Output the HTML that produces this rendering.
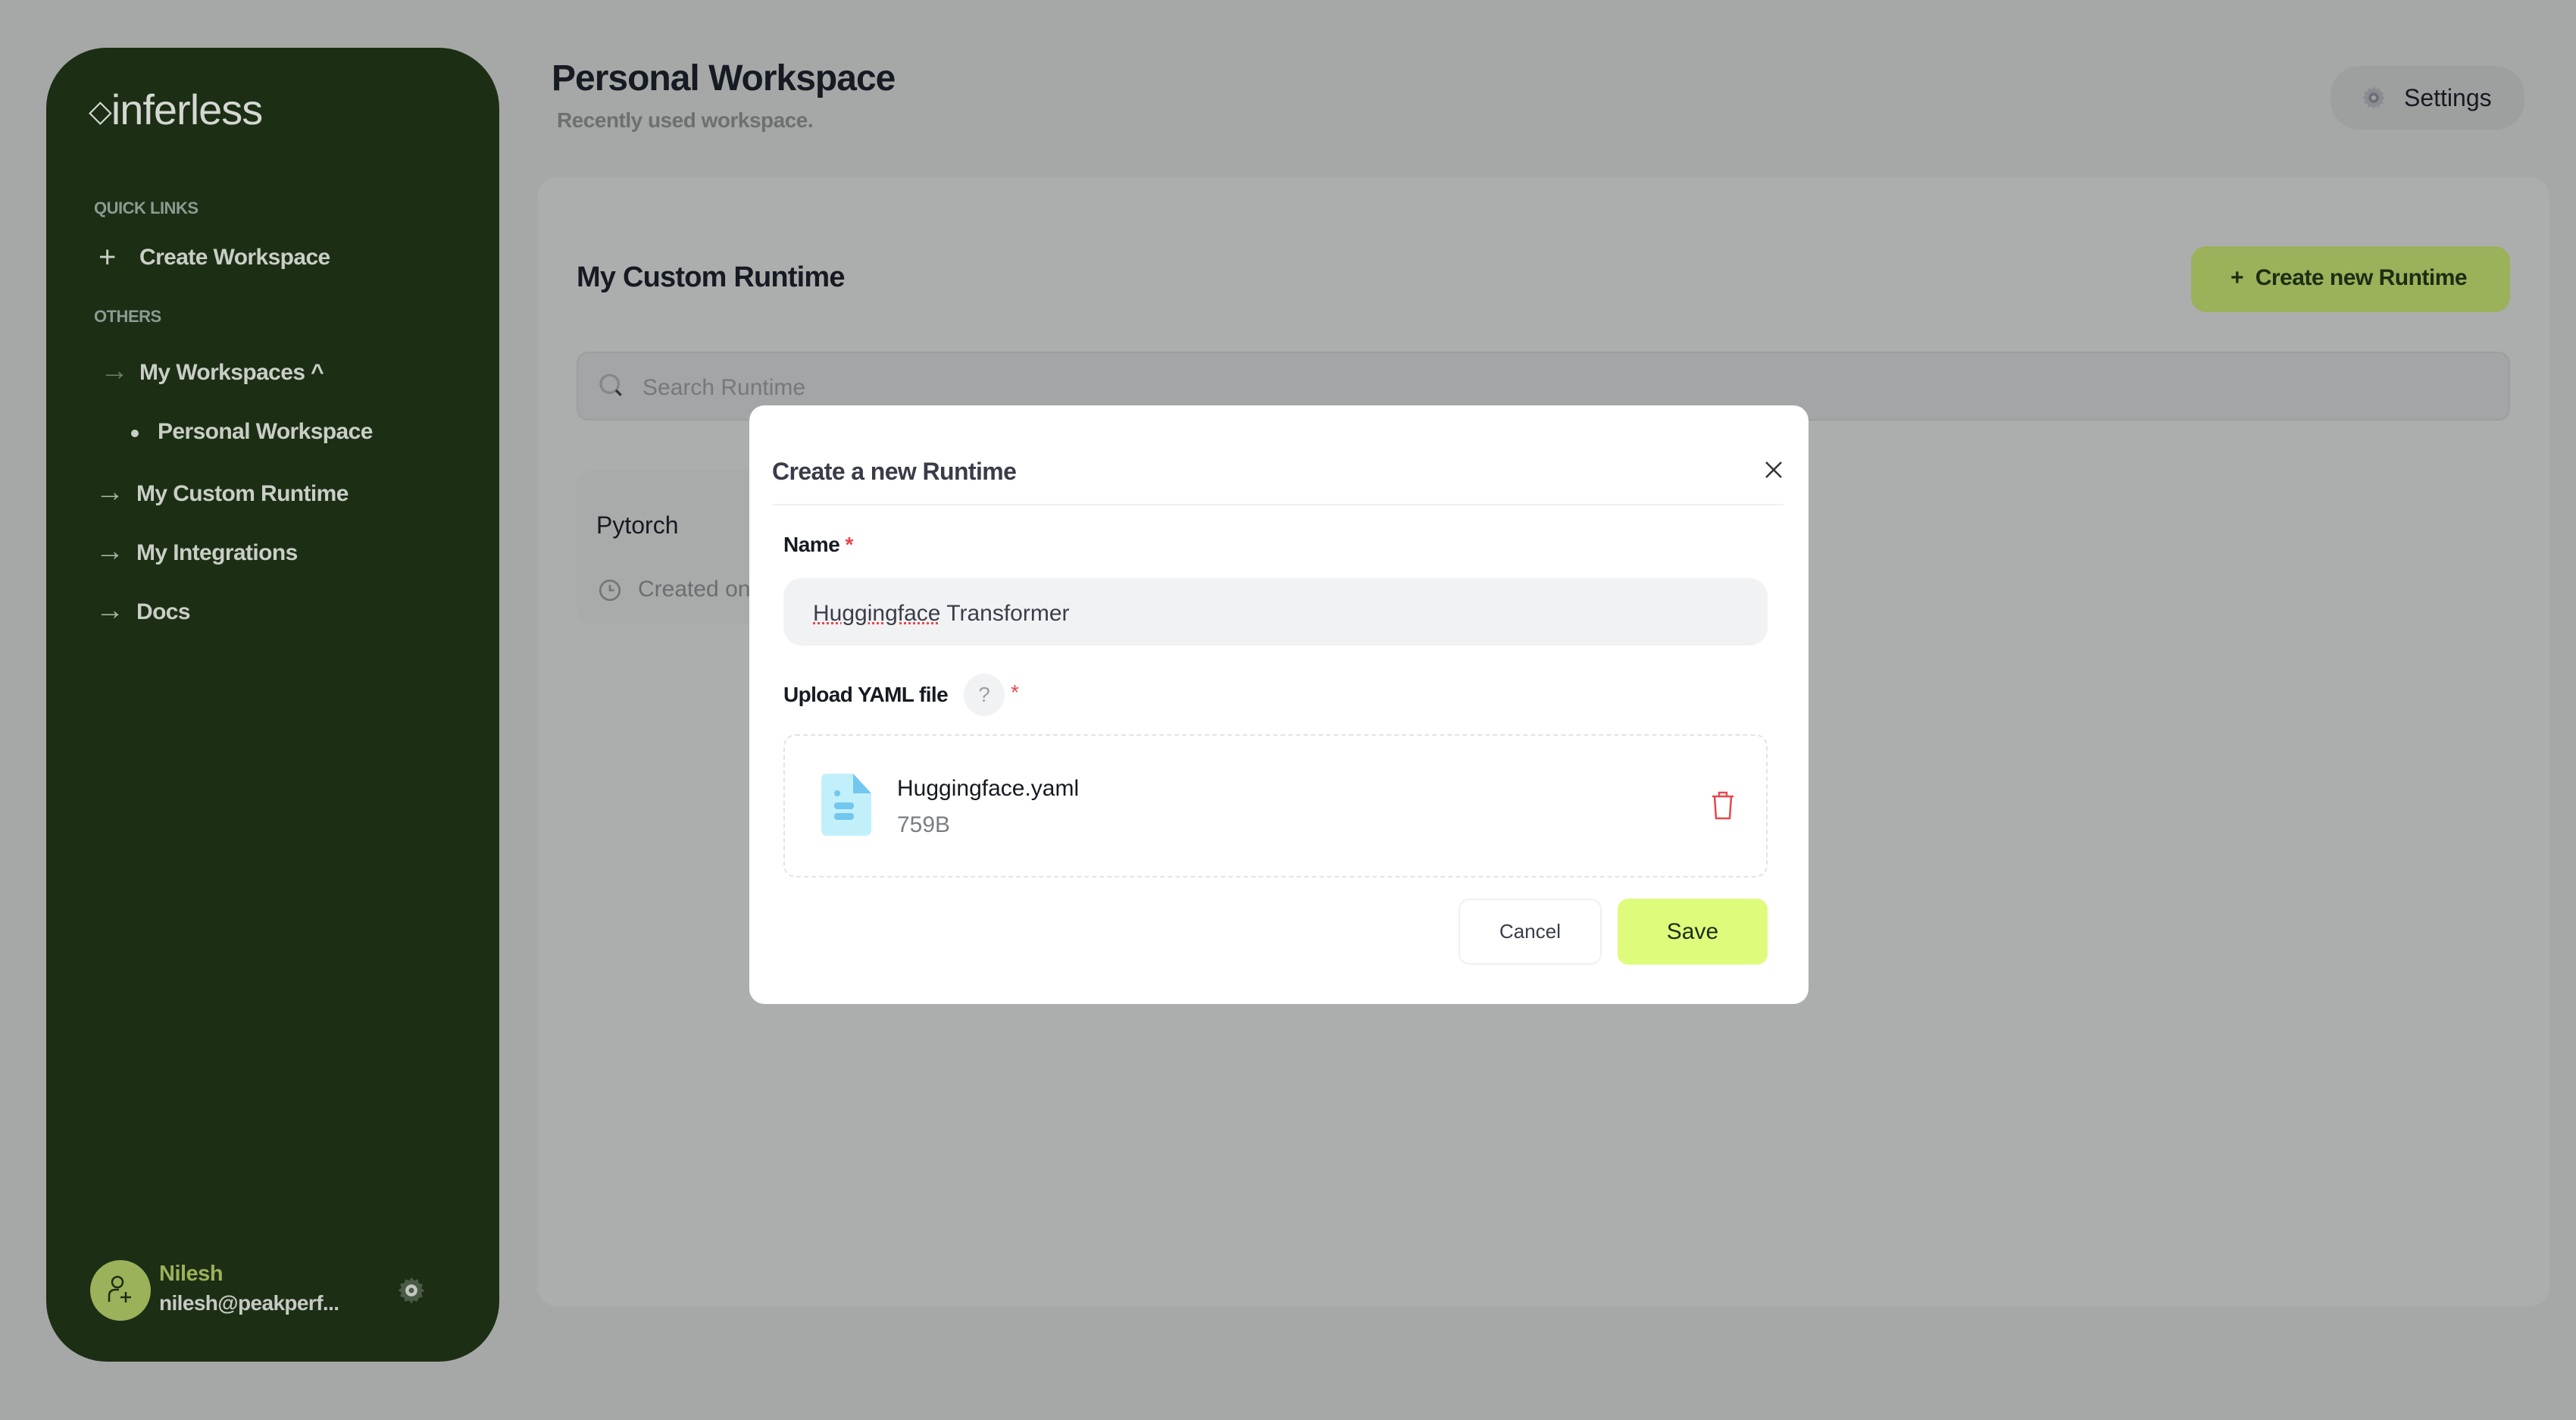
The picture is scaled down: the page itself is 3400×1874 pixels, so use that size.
<!DOCTYPE html>
<html><head><meta charset="utf-8"><style>
*{margin:0;padding:0;box-sizing:border-box}
body{width:3400px;height:1874px;background:#a6a8a7;font-family:"Liberation Sans",sans-serif;position:relative;overflow:hidden}
.a{position:absolute;white-space:nowrap}
.sb{position:absolute;left:61px;top:63px;width:598px;height:1734px;background:#1c2e14;border-radius:80px}
.lbl{color:#8e9a94;font-size:22px;font-weight:bold;letter-spacing:-0.5px}
.it{color:#c9cec6;font-size:30px;font-weight:bold;transform:translateY(-50%);letter-spacing:-0.6px}
.ar{color:#aab0a6;font-size:38px;font-weight:normal;transform:translateY(-55%)}
</style></head><body>
<div class="sb"></div>
<div class="a" style="left:117px;top:112px;font-size:56px;color:#d4d7d2;letter-spacing:-1px"><span style="font-size:40px;vertical-align:4px">&#9671;</span>inferless</div>
<div class="a lbl" style="left:124px;top:262px">QUICK LINKS</div>
<div class="a it" style="left:130px;top:340px;font-weight:normal;font-size:40px">+</div>
<div class="a it" style="left:184px;top:340px">Create Workspace</div>
<div class="a lbl" style="left:124px;top:405px">OTHERS</div>
<div class="a ar" style="left:132px;top:492px;color:#6d786a">&#8594;</div>
<div class="a it" style="left:184px;top:492px">My Workspaces ^</div>
<div class="a" style="left:173px;top:567px;width:10px;height:10px;border-radius:50%;background:#c9cec6"></div>
<div class="a it" style="left:208px;top:570px">Personal Workspace</div>
<div class="a ar" style="left:126px;top:652px">&#8594;</div>
<div class="a it" style="left:180px;top:652px">My Custom Runtime</div>
<div class="a ar" style="left:126px;top:730px">&#8594;</div>
<div class="a it" style="left:180px;top:730px">My Integrations</div>
<div class="a ar" style="left:126px;top:808px">&#8594;</div>
<div class="a it" style="left:180px;top:808px">Docs</div>
<div class="a" style="left:119px;top:1663px;width:80px;height:80px;border-radius:50%;background:#9bb15a"></div>
<svg class="a" style="left:135px;top:1678px" width="50" height="50" viewBox="0 0 50 50" fill="none" stroke="#1c2e14" stroke-width="2.5"><circle cx="20" cy="14" r="7"/><path d="M9 40V32q0-8 9-8h4M24 34h14M31 27v14"/></svg>
<div class="a" style="left:210px;top:1665px;color:#9bb15a;font-size:29px;font-weight:bold;letter-spacing:-0.5px">Nilesh</div>
<div class="a" style="left:210px;top:1704px;color:#c7c9c5;font-size:28px;font-weight:bold;letter-spacing:-0.6px">nilesh@peakperf...</div>
<svg class="a" style="left:522px;top:1682px" width="42" height="42" viewBox="0 0 24 24"><path fill="#4a5a45" d="M12 2l2 2.5 3-1 .5 3 3 1-1 3L22 12l-2.5 2 1 3-3 .5-1 3-3-1L12 22l-2-2.5-3 1-.5-3-3-1 1-3L2 12l2.5-2-1-3 3-.5 1-3 3 1z"/><circle cx="12" cy="12" r="4.5" fill="#c4c6c2"/><circle cx="12" cy="12" r="2" fill="#4a5a45"/></svg>

<div class="a" style="left:728px;top:76px;font-size:48px;font-weight:bold;color:#161a22;letter-spacing:-1px">Personal Workspace</div>
<div class="a" style="left:735px;top:143px;font-size:28px;font-weight:bold;color:#6d706f;letter-spacing:-0.5px">Recently used workspace.</div>
<div class="a" style="left:3076px;top:87px;width:256px;height:84px;border-radius:38px;background:#9e9f9f"></div>
<svg class="a" style="left:3115px;top:111px" width="36" height="36" viewBox="0 0 24 24"><path fill="#8a8c92" d="M12 2l2 2.5 3-1 .5 3 3 1-1 3L22 12l-2.5 2 1 3-3 .5-1 3-3-1L12 22l-2-2.5-3 1-.5-3-3-1 1-3L2 12l2.5-2-1-3 3-.5 1-3 3 1z"/><circle cx="12" cy="12" r="4.5" fill="#6c6e78"/><circle cx="12" cy="12" r="2" fill="#a0a2a2"/></svg>
<div class="a" style="left:3173px;top:111px;font-size:32px;color:#161a22">Settings</div>

<div class="a" style="left:709px;top:234px;width:2656px;height:1490px;border-radius:26px;background:#acaead"></div>
<div class="a" style="left:761px;top:345px;font-size:38px;font-weight:bold;color:#161a22;letter-spacing:-0.8px">My Custom Runtime</div>
<div class="a" style="left:2892px;top:325px;width:421px;height:87px;border-radius:20px;background:#9bb15a"></div>
<div class="a" style="left:2944px;top:350px;font-size:30px;font-weight:bold;color:#1c2e14;letter-spacing:-0.5px">+&nbsp; Create new Runtime</div>
<div class="a" style="left:761px;top:464px;width:2552px;height:91px;border-radius:16px;background:#a3a5a6;border:2px solid #9c9e9f"></div>
<svg class="a" style="left:788px;top:490px" width="40" height="40" viewBox="0 0 24 24" fill="none" stroke="#85878b" stroke-width="2"><circle cx="10" cy="10" r="7"/><path d="M15 15l4 4" stroke="#333"/></svg>
<div class="a" style="left:848px;top:495px;font-size:30px;color:#76787c">Search Runtime</div>
<div class="a" style="left:761px;top:620px;width:500px;height:204px;border-radius:20px;background:#a9abab"></div>
<div class="a" style="left:787px;top:675px;font-size:32px;color:#161a22">Pytorch</div>
<svg class="a" style="left:788px;top:762px" width="34" height="34" viewBox="0 0 24 24" fill="none" stroke="#777" stroke-width="2"><circle cx="12" cy="12" r="9"/><path d="M12 7v5h4"/></svg>
<div class="a" style="left:842px;top:761px;font-size:30px;color:#6b6e70">Created on</div>

<div class="a" style="left:989px;top:535px;width:1398px;height:790px;border-radius:20px;background:#fff"></div>
<div class="a" style="left:1019px;top:604px;font-size:32px;font-weight:bold;color:#393c48;letter-spacing:-0.6px">Create a new Runtime</div>
<svg class="a" style="left:2328px;top:607px" width="26" height="26" viewBox="0 0 26 26" stroke="#333" stroke-width="2.5"><path d="M3 3l20 20M23 3L3 23"/></svg>
<div class="a" style="left:1019px;top:665px;width:1335px;height:2px;background:#eef0f1"></div>
<div class="a" style="left:1034px;top:703px;font-size:28px;font-weight:bold;color:#161a22;letter-spacing:-0.5px">Name <span style="color:#e5484d">*</span></div>
<div class="a" style="left:1034px;top:763px;width:1299px;height:89px;border-radius:24px;background:#f1f2f4"></div>
<div class="a" style="left:1073px;top:793px;font-size:30px;color:#3b3e4a"><span style="text-decoration:underline dotted #e5484d">Huggingface</span> Transformer</div>
<div class="a" style="left:1034px;top:901px;font-size:28px;font-weight:bold;color:#161a22;letter-spacing:-0.6px">Upload YAML file</div>
<div class="a" style="left:1272px;top:889px;width:54px;height:56px;border-radius:50%;background:#f1f2f4;color:#9ea0a6;font-size:28px;text-align:center;line-height:56px">?</div>
<div class="a" style="left:1334px;top:898px;font-size:28px;color:#e5484d">*</div>
<div class="a" style="left:1034px;top:969px;width:1299px;height:189px;border-radius:16px;border:2px dashed #e2e3e6"></div>
<svg class="a" style="left:1084px;top:1021px" width="66" height="82" viewBox="0 0 66 82"><path d="M8 0h34l24 26v48q0 8-8 8H8q-8 0-8-8V8q0-8 8-8z" fill="#c1f0fb"/><path d="M42 0l24 26H42z" fill="#72c7ef"/><rect x="17" y="22" width="8" height="8" rx="4" fill="#72c7ef"/><rect x="17" y="38" width="26" height="9" rx="4" fill="#72c7ef"/><rect x="17" y="52" width="26" height="9" rx="4" fill="#72c7ef"/></svg>
<div class="a" style="left:1184px;top:1024px;font-size:30px;color:#161a22">Huggingface.yaml</div>
<div class="a" style="left:1184px;top:1072px;font-size:30px;color:#7a7d85">759B</div>
<svg class="a" style="left:2258px;top:1044px" width="32" height="38" viewBox="0 0 32 38" fill="none" stroke="#e5484d" stroke-width="2.5"><path d="M2 7h28M11 7V2h10v5M5 7l2 29h18l2-29"/></svg>
<div class="a" style="left:1925px;top:1186px;width:189px;height:87px;border-radius:14px;border:2px solid #eef0f1;text-align:center;line-height:83px;font-size:26px;color:#393c48">Cancel</div>
<div class="a" style="left:2135px;top:1186px;width:198px;height:87px;border-radius:14px;background:#dffb7c;text-align:center;line-height:87px;font-size:30px;color:#1c2e14">Save</div>
</body></html>
